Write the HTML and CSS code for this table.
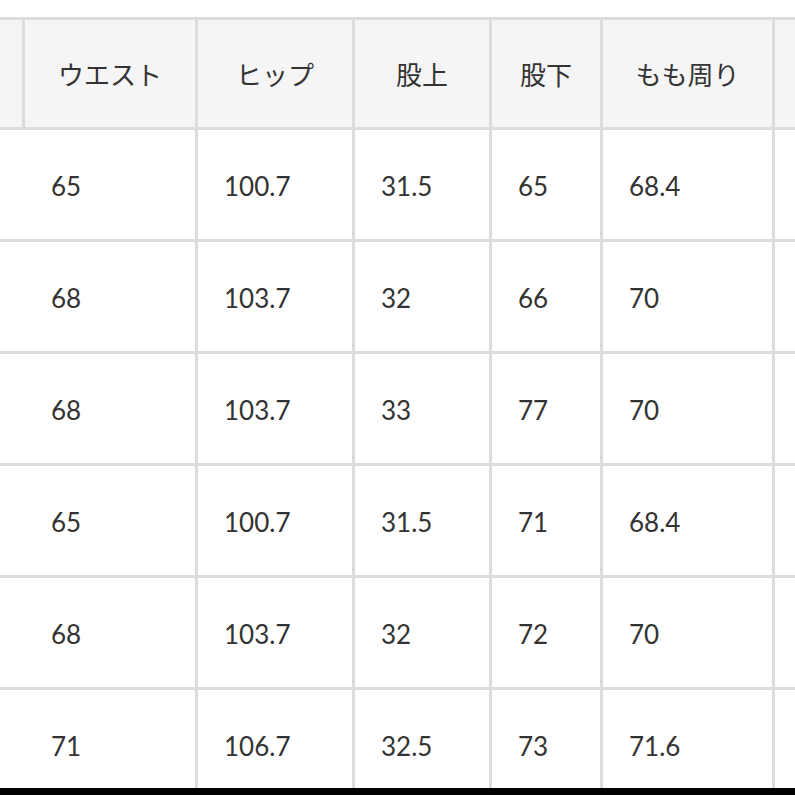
FILE: index.html
```html
<!DOCTYPE html>
<html lang="ja">
<head>
<meta charset="utf-8">
<link rel="stylesheet" href="styles.css">
</head>
<body>
<div class="page">
  <div class="viewport">
    <div class="grid">
      <div class="cell head"></div>
      <div class="cell head">ウエスト</div>
      <div class="cell head">ヒップ</div>
      <div class="cell head">股上</div>
      <div class="cell head">股下</div>
      <div class="cell head">もも周り</div>
      <div class="cell head"></div>

      <div class="cell"></div><div class="cell">65</div><div class="cell">100.7</div><div class="cell">31.5</div><div class="cell">65</div><div class="cell">68.4</div><div class="cell"></div>
      <div class="cell"></div><div class="cell">68</div><div class="cell">103.7</div><div class="cell">32</div><div class="cell">66</div><div class="cell">70</div><div class="cell"></div>
      <div class="cell"></div><div class="cell">68</div><div class="cell">103.7</div><div class="cell">33</div><div class="cell">77</div><div class="cell">70</div><div class="cell"></div>
      <div class="cell"></div><div class="cell">65</div><div class="cell">100.7</div><div class="cell">31.5</div><div class="cell">71</div><div class="cell">68.4</div><div class="cell"></div>
      <div class="cell"></div><div class="cell">68</div><div class="cell">103.7</div><div class="cell">32</div><div class="cell">72</div><div class="cell">70</div><div class="cell"></div>
      <div class="cell"></div><div class="cell">71</div><div class="cell">106.7</div><div class="cell">32.5</div><div class="cell">73</div><div class="cell">71.6</div><div class="cell"></div>
    </div>
  </div>
  <div class="bar"></div>
</div>
</body>
</html>
```

FILE: styles.css
```css
* { box-sizing: border-box; }
html, body {
  margin: 0;
  padding: 0;
  background: #ffffff;
}
.page {
  width: 795px;
  height: 795px;
  overflow: hidden;
  display: flex;
  flex-direction: column;
}
.viewport {
  height: 788px;
  overflow: hidden;
  padding-top: 17px;
  flex: none;
}
.grid {
  display: grid;
  grid-template-columns: 22px 170px 154px 134px 108px 169px 40px;
  grid-template-rows: 107px repeat(6, 109px);
  gap: 3px;
  padding-top: 3px;
  background: #dcdcdc;
  width: 815px;
  font-family: Lato, "Noto Sans CJK JP", sans-serif;
  font-size: 26px;
  color: #333333;
}
.cell {
  background: #ffffff;
  display: flex;
  align-items: center;
  padding-left: 26px;
  padding-top: 3px;
  white-space: nowrap;
}
.head {
  background: #f5f5f5;
  justify-content: center;
  padding-left: 0;
  padding-top: 0;
}
.bar {
  flex: 1;
  background: #000000;
}
```
